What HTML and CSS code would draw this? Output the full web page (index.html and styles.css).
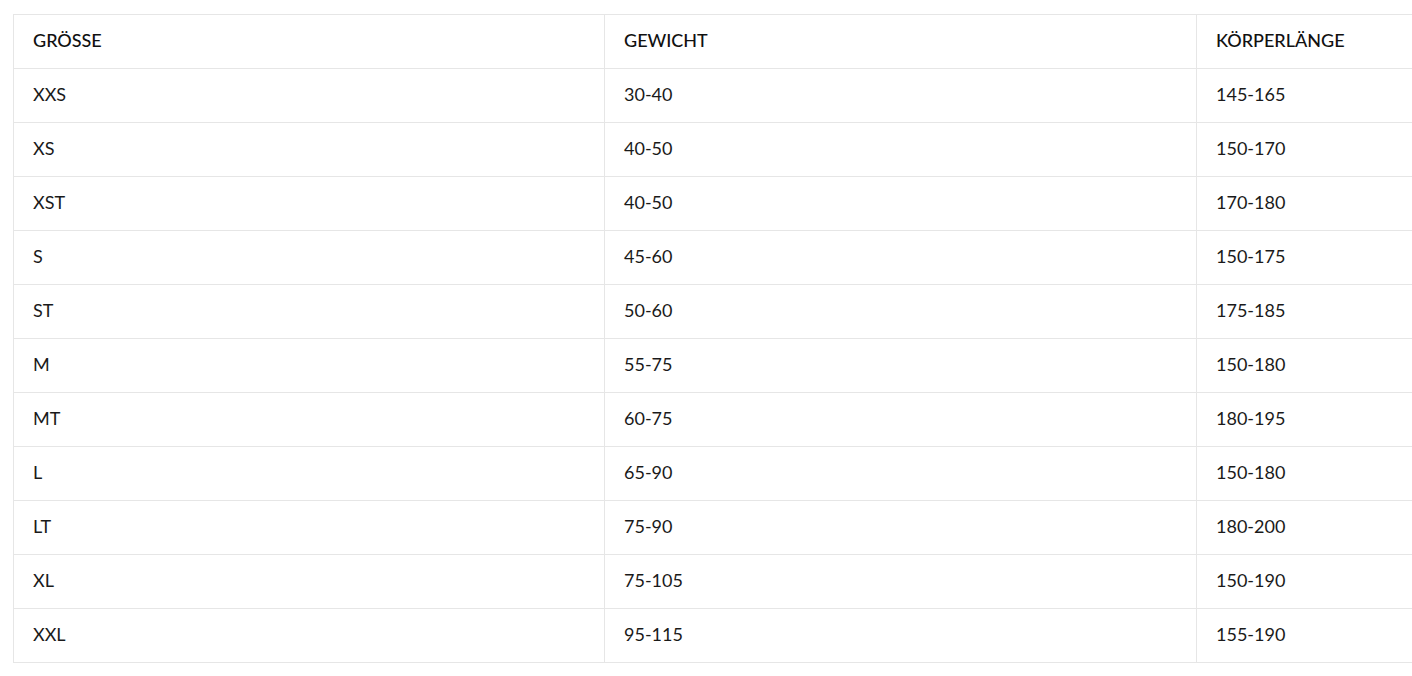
FILE: index.html
```html
<!DOCTYPE html>
<html lang="de">
<head>
<meta charset="utf-8">
<title>Größentabelle</title>
<link rel="stylesheet" href="styles.css">
</head>
<body>
<div class="page">
  <table class="sizes">
    <colgroup>
      <col class="c1"><col class="c2"><col class="c3">
    </colgroup>
    <thead>
      <tr><th>GRÖSSE</th><th>GEWICHT</th><th>KÖRPERLÄNGE</th></tr>
    </thead>
    <tbody>
      <tr><td>XXS</td><td>30-40</td><td>145-165</td></tr>
      <tr><td>XS</td><td>40-50</td><td>150-170</td></tr>
      <tr><td>XST</td><td>40-50</td><td>170-180</td></tr>
      <tr><td>S</td><td>45-60</td><td>150-175</td></tr>
      <tr><td>ST</td><td>50-60</td><td>175-185</td></tr>
      <tr><td>M</td><td>55-75</td><td>150-180</td></tr>
      <tr><td>MT</td><td>60-75</td><td>180-195</td></tr>
      <tr><td>L</td><td>65-90</td><td>150-180</td></tr>
      <tr><td>LT</td><td>75-90</td><td>180-200</td></tr>
      <tr><td>XL</td><td>75-105</td><td>150-190</td></tr>
      <tr><td>XXL</td><td>95-115</td><td>155-190</td></tr>
    </tbody>
  </table>
</div>
</body>
</html>
```
FILE: styles.css
```css
html, body {
  margin: 0;
  padding: 0;
  background: #ffffff;
  overflow: hidden;
}
.page {
  padding: 14px 0 0 13px;
  overflow: hidden;
  width: 1399px;
}
.sizes {
  border-collapse: collapse;
  table-layout: fixed;
  width: 1775px;
  font-family: Lato, "Open Sans", sans-serif;
  font-size: 18px;
  color: #1a1a1a;
}
.c1 { width: 591px; }
.c2 { width: 592px; }
.c3 { width: 592px; }
.sizes th,
.sizes td {
  border: 1px solid #e6e6e6;
  height: 54px;
  padding: 0 19px 4px 19px;
  text-align: left;
  vertical-align: middle;
  font-weight: 400;
  box-sizing: border-box;
}
.sizes th {
  font-weight: 500;
  color: #111;
}
```
